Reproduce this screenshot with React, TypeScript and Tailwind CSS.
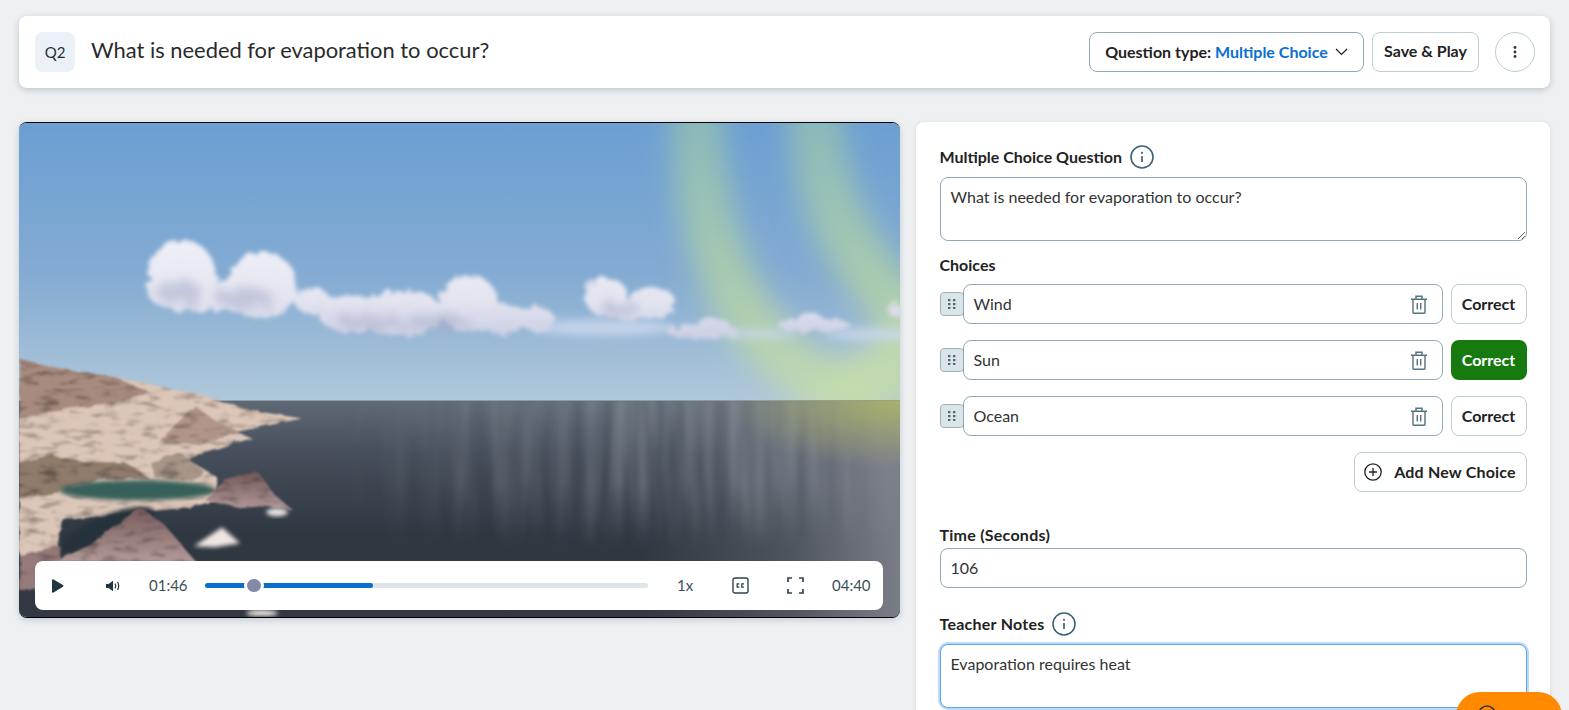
import React from "react";

const Trash = () => (
  <svg width="18" height="19" viewBox="0 0 18 19" fill="none" stroke="#56717f" strokeWidth="1.4" className="shrink-0">
    <path d="M1 4.2h16M6 4V1.2h6V4M3 4.2V17.6a.6.6 0 0 0 .6.6h10.8a.6.6 0 0 0 .6-.6V4.2" />
    <path d="M7.3 8v6.5M10.7 8v6.5" />
  </svg>
);

const Info = () => (
  <svg width="24" height="24" viewBox="0 0 24 24" fill="none" className="shrink-0">
    <circle cx="12" cy="12" r="11" stroke="#3f6273" strokeWidth="1.6" />
    <circle cx="12" cy="7.8" r="1.1" fill="#3f6273" />
    <path d="M12 11v6" stroke="#3f6273" strokeWidth="1.7" />
  </svg>
);

const Handle = () => (
  <div className="flex h-[24px] w-[24px] shrink-0 items-center justify-start rounded-[4px] border border-[#9db4bf] bg-[#dbe5e8] pl-[7px]">
    <svg width="8" height="10" viewBox="0 0 8 10" fill="#4d6775">
      <rect x="0" y="0" width="2.4" height="2.2" />
      <rect x="5" y="0" width="2.4" height="2.2" />
      <rect x="0" y="4" width="2.4" height="2.2" />
      <rect x="5" y="4" width="2.4" height="2.2" />
      <rect x="0" y="8" width="2.4" height="2.2" />
      <rect x="5" y="8" width="2.4" height="2.2" />
    </svg>
  </div>
);

const Choice = ({ label, correct }: { label: string; correct?: boolean }) => (
  <div className="flex items-center">
    <Handle />
    <div className="relative -ml-[1px] flex h-[40px] w-[480px] items-center justify-between rounded-[8px] border border-[#8fa9b5] bg-white pl-[10px] pr-[14px] text-[16px] text-[#333]">
      <span className="pb-[1px]">{label}</span>
      <Trash />
    </div>
    <button
      className={
        correct
          ? "ml-[8px] flex h-[40px] w-[76px] items-center justify-center rounded-[8px] bg-[#167a0e] pb-[1px] text-[16px] font-bold text-white"
          : "ml-[8px] flex h-[40px] w-[76px] items-center justify-center rounded-[8px] border border-[#bccdd5] bg-white pb-[1px] text-[16px] font-bold text-[#222]"
      }
    >
      Correct
    </button>
  </div>
);

const VideoScene = () => (
  <svg viewBox="19 122 881 495" preserveAspectRatio="none" className="block h-full w-full">
    <defs>
      <linearGradient id="sky" x1="0" y1="0" x2="0" y2="1">
        <stop offset="0" stopColor="#6b9fd3" />
        <stop offset="0.55" stopColor="#84abd2" />
        <stop offset="1" stopColor="#b0c8da" />
      </linearGradient>
      <linearGradient id="sea" x1="0" y1="0" x2="0" y2="1">
        <stop offset="0" stopColor="#5f6975" />
        <stop offset="0.25" stopColor="#454e5a" />
        <stop offset="0.62" stopColor="#2f3741" />
        <stop offset="1" stopColor="#313843" />
      </linearGradient>
      <linearGradient id="haze" gradientUnits="userSpaceOnUse" x1="640" y1="0" x2="899" y2="0">
        <stop offset="0" stopColor="#8a8e98" stopOpacity="0" />
        <stop offset="0.6" stopColor="#8a8e98" stopOpacity="0.35" />
        <stop offset="1" stopColor="#80848e" stopOpacity="0.9" />
      </linearGradient>
      <radialGradient id="olive" gradientUnits="userSpaceOnUse" cx="899" cy="400" r="170" gradientTransform="translate(0 240) scale(1 0.4)">
        <stop offset="0" stopColor="#b4bd63" stopOpacity="0.8" />
        <stop offset="1" stopColor="#b4bd63" stopOpacity="0" />
      </radialGradient>
      <linearGradient id="beam" gradientUnits="userSpaceOnUse" x1="0" y1="122" x2="0" y2="400">
        <stop offset="0" stopColor="#93bfb4" />
        <stop offset="0.6" stopColor="#b2d2a6" />
        <stop offset="1" stopColor="#c6dcaa" />
      </linearGradient>
      <linearGradient id="peak" x1="0" y1="0" x2="0" y2="1">
        <stop offset="0" stopColor="#75595a" />
        <stop offset="1" stopColor="#b39a98" />
      </linearGradient>
      <linearGradient id="cloudFill" gradientUnits="userSpaceOnUse" x1="0" y1="240" x2="0" y2="340">
        <stop offset="0" stopColor="#efeff7" />
        <stop offset="0.6" stopColor="#e3e4f0" />
        <stop offset="1" stopColor="#c9cde2" />
      </linearGradient>
      <filter id="b3" x="-30%" y="-30%" width="160%" height="160%">
        <feGaussianBlur stdDeviation="2.2" />
      </filter>
      <filter id="b14" x="-60%" y="-20%" width="220%" height="140%">
        <feGaussianBlur stdDeviation="14" />
      </filter>
      <filter id="b5" x="-30%" y="-60%" width="160%" height="220%">
        <feGaussianBlur stdDeviation="5" />
      </filter>
      <filter id="cloud" x="-10%" y="-20%" width="120%" height="140%">
        <feTurbulence type="fractalNoise" baseFrequency="0.12" numOctaves="3" seed="4" />
        <feDisplacementMap in="SourceGraphic" scale="11" />
        <feGaussianBlur stdDeviation="2" />
      </filter>
      <filter id="cloudShade" x="-20%" y="-40%" width="140%" height="180%">
        <feTurbulence type="fractalNoise" baseFrequency="0.08" numOctaves="3" seed="9" />
        <feDisplacementMap in="SourceGraphic" scale="22" />
        <feGaussianBlur stdDeviation="5" />
      </filter>
      <filter id="rock" x="-5%" y="-5%" width="110%" height="110%" colorInterpolationFilters="sRGB">
        <feTurbulence type="fractalNoise" baseFrequency="0.07" numOctaves="3" seed="7" result="n1" />
        <feDisplacementMap in="SourceGraphic" in2="n1" scale="5" result="d" />
        <feTurbulence type="fractalNoise" baseFrequency="0.05 0.17" numOctaves="4" seed="3" result="n2" />
        <feColorMatrix in="n2" values="0.9 0 0 0 0.55  0.9 0 0 0 0.55  0.9 0 0 0 0.55  0 0 0 0 1" result="g" />
        <feComposite in="d" in2="g" operator="arithmetic" k1="1" k2="0" k3="0" k4="0" />
        <feGaussianBlur stdDeviation="0.8" />
      </filter>
      <filter id="rain" x="0" y="0" width="100%" height="100%">
        <feTurbulence type="fractalNoise" baseFrequency="0.07 0.005" numOctaves="3" seed="11" />
        <feColorMatrix values="0 0 0 0 0.6  0 0 0 0 0.63  0 0 0 0 0.68  0 0 0 1.7 -0.55" />
        <feGaussianBlur stdDeviation="2.5" />
      </filter>
      <linearGradient id="rainV" x1="0" y1="0" x2="0" y2="1">
        <stop offset="0" stopColor="#fff" stopOpacity="0.35" />
        <stop offset="0.55" stopColor="#fff" stopOpacity="0.38" />
        <stop offset="1" stopColor="#fff" stopOpacity="0" />
      </linearGradient>
      <linearGradient id="rainH" x1="0" y1="0" x2="1" y2="0">
        <stop offset="0" stopColor="#000" />
        <stop offset="0.45" stopColor="#fff" />
        <stop offset="1" stopColor="#fff" />
      </linearGradient>
      <mask id="rainMV" maskUnits="userSpaceOnUse" x="340" y="400" width="560" height="150">
        <rect x="340" y="400" width="560" height="150" fill="url(#rainV)" />
      </mask>
      <mask id="rainMH" maskUnits="userSpaceOnUse" x="340" y="340" width="560" height="210">
        <rect x="340" y="340" width="560" height="210" fill="url(#rainH)" />
      </mask>
    </defs>

    <rect x="19" y="122" width="881" height="278" fill="url(#sky)" />

    {/* green beams */}
    <g filter="url(#b14)" fill="none">
      <path d="M698 100C695 190 715 280 770 345C800 375 850 395 880 410" stroke="url(#beam)" strokeWidth="54" opacity="0.82" />
      <path d="M815 100C815 180 840 250 920 330" stroke="url(#beam)" strokeWidth="56" opacity="0.82" />
      <path d="M790 402L920 402L920 300Z" fill="#c6dcaa" stroke="none" opacity="0.85" />
    </g>

    {/* thin cloud band */}
    <g filter="url(#b5)" fill="#cad8ec" opacity="0.9">
      <ellipse cx="605" cy="327" rx="70" ry="8" />
      <ellipse cx="875" cy="334" rx="50" ry="6" />
      <ellipse cx="760" cy="333" rx="40" ry="4" />
    </g>

    {/* clouds */}
    <g filter="url(#cloud)" fill="url(#cloudFill)">
      <ellipse cx="182" cy="275" rx="34" ry="36" />
      <ellipse cx="163" cy="285" rx="17" ry="20" />
      <ellipse cx="262" cy="285" rx="36" ry="33" />
      <rect x="175" y="280" width="115" height="30" rx="12" />
      <ellipse cx="312" cy="300" rx="18" ry="13" />
      <ellipse cx="352" cy="313" rx="34" ry="19" />
      <ellipse cx="402" cy="313" rx="42" ry="23" />
      <ellipse cx="468" cy="302" rx="30" ry="28" />
      <ellipse cx="500" cy="318" rx="32" ry="15" />
      <ellipse cx="537" cy="318" rx="17" ry="12" />
      <ellipse cx="606" cy="296" rx="21" ry="20" />
      <ellipse cx="652" cy="302" rx="23" ry="16" />
      <ellipse cx="630" cy="309" rx="32" ry="9" />
      <ellipse cx="702" cy="331" rx="36" ry="8" />
      <ellipse cx="714" cy="326" rx="16" ry="9" />
      <ellipse cx="815" cy="325" rx="36" ry="7" />
      <ellipse cx="810" cy="320" rx="14" ry="7" />
      <ellipse cx="896" cy="310" rx="6" ry="8" />
    </g>
    <g filter="url(#cloudShade)" fill="#a9aecb" opacity="0.55">
      <ellipse cx="178" cy="292" rx="24" ry="13" />
      <ellipse cx="245" cy="298" rx="30" ry="11" />
      <ellipse cx="370" cy="322" rx="34" ry="8" />
      <ellipse cx="440" cy="322" rx="30" ry="8" />
      <ellipse cx="620" cy="308" rx="22" ry="6" />
    </g>

    {/* sea */}
    <rect x="19" y="400" width="881" height="217" fill="url(#sea)" />
    <g mask="url(#rainMH)">
      <rect x="340" y="400" width="560" height="150" filter="url(#rain)" mask="url(#rainMV)" />
    </g>
    <rect x="19" y="400" width="881" height="217" fill="url(#haze)" />
    <rect x="19" y="400" width="881" height="217" fill="url(#olive)" />

    {/* land */}
    <g filter="url(#rock)">
      <path d="M19 358L60 368L117 377L194 393L252 410L302 418L258 427L235 432L252 438L200 453L188 460L217 477L218 500L190 507L140 512L62 520L55 560L40 590L19 590Z" fill="#dcc6b8" />
      <path d="M19 358L60 368L117 377L150 392L120 402L70 408L19 418Z" fill="#a88b7f" />
      <path d="M195 405L215 420L240 432L200 445L160 440Z" fill="#b1958a" />
      <path d="M19 462L50 455L85 462L125 462L150 478L100 480L60 492L19 498Z" fill="#917c6c" />
      <path d="M150 462L180 452L205 472L190 480L155 478Z" fill="#a99689" />
      <path d="M19 555L60 545L62 590L19 590Z" fill="#957a79" />
    </g>
    <ellipse cx="138" cy="490" rx="78" ry="10" fill="#38605a" filter="url(#b3)" />
    <ellipse cx="108" cy="530" rx="50" ry="15" transform="rotate(-22 108 530)" fill="#25323a" filter="url(#b3)" />

    <g filter="url(#rock)">
      <path d="M205 500L232 476L258 472L275 495L293 510L260 506L240 508Z" fill="url(#peak)" />
      <path d="M53 562L90 545L112 527L141 507L165 525L196 562Z" fill="url(#peak)" />
    </g>
    <path d="M194 546L222 527L240 543L215 547Z" fill="#efe6e3" filter="url(#b3)" />
    <ellipse cx="277" cy="512" rx="11" ry="4" fill="#ece6e3" filter="url(#b3)" />
    <ellipse cx="262" cy="613" rx="16" ry="3" fill="#efe6e2" filter="url(#b3)" />
  </svg>
);

const Controls = () => (
  <div className="absolute bottom-[7px] left-[16px] flex h-[49px] w-[848px] items-center rounded-[8px] bg-white text-[15px] text-[#3c4f59]">
    <svg width="13" height="14" viewBox="0 0 13 14" className="ml-[16px] shrink-0">
      <path d="M1 1.2C1 .4 1.8 0 2.5.5l9.5 5.6c.6.4.6 1.3 0 1.7L2.5 13.5c-.7.5-1.5.1-1.5-.7Z" fill="#1f3640" />
    </svg>
    <svg width="15" height="12" viewBox="0 0 15 12" className="ml-[42px] shrink-0" fill="none">
      <path d="M0 4h2.6L7 .8v10.4L2.6 8H0Z" fill="#1f3640" />
      <path d="M9 3.6c.9 1.4.9 3.4 0 4.8M11.5 2c1.4 2.4 1.4 5.6 0 8" stroke="#1f3640" strokeWidth="1.2" />
    </svg>
    <span className="ml-[28px] w-[37px] shrink-0">01:46</span>
    <div className="relative ml-[19px] h-[5px] w-[443px] shrink-0 rounded-full bg-[#dde5e8]">
      <div className="absolute left-0 top-0 h-[5px] w-[168px] rounded-full bg-[#0a6fd0]" />
      <div className="absolute left-[39px] top-[-7px] h-[19px] w-[20px] rounded-full border-[3px] border-white bg-[#8389a8]" />
    </div>
    <span className="ml-[29px] w-[14px] shrink-0">1x</span>
    <svg width="17" height="17" viewBox="0 0 17 17" fill="none" className="ml-[41px] shrink-0">
      <rect x="1" y="1" width="15" height="15" rx="2" stroke="#2d4550" strokeWidth="1.4" />
      <path d="M7.4 6.8H5.2v3.4h2.2M12 6.8H9.8v3.4H12" stroke="#2d4550" strokeWidth="1.3" />
    </svg>
    <svg width="17" height="17" viewBox="0 0 17 17" fill="none" stroke="#2d4550" strokeWidth="1.7" className="ml-[38px] shrink-0">
      <path d="M1 5V1h4M12 1h4v4M16 12v4h-4M5 16H1v-4" />
    </svg>
    <span className="ml-[28px] shrink-0">04:40</span>
  </div>
);

export default function App() {
  return (
    <div className="relative h-[710px] w-full overflow-hidden bg-[#eef0f2] font-['Lato','Liberation_Sans',sans-serif] text-[#222]">
      <div className="px-[19px] pt-[16px]">
        <div className="flex h-[72px] w-[1531px] items-center rounded-[8px] bg-white pl-[16px] pr-[15px] shadow-[0_2px_6px_rgba(60,90,105,0.28)]">
          <div className="flex h-[40px] w-[40px] items-center justify-center rounded-[8px] bg-[#ecf1f8] text-[15px] text-[#222f3a]">
            Q2
          </div>
          <div className="ml-[16px] flex-1 pb-[3px] text-[21.9px] text-[#2a2a2a]">What is needed for evaporation to occur?</div>
          <button className="flex h-[40px] w-[275px] items-center justify-center gap-[7px] rounded-[8px] border border-[#8fa9b5] text-[16px] font-bold">
            <span>
              Question type: <span className="text-[#0a6fd0]">Multiple Choice</span>
            </span>
            <svg width="13" height="8" viewBox="0 0 13 8" fill="none" stroke="#222" strokeWidth="1.2">
              <path d="M1 1l5.5 5.5L12 1" />
            </svg>
          </button>
          <button className="ml-[8px] flex h-[40px] w-[107px] items-center justify-center rounded-[8px] border border-[#bccdd5] pb-[2px] text-[16px] font-bold">
            Save &amp; Play
          </button>
          <button className="ml-[16px] flex h-[40px] w-[40px] items-center justify-center rounded-full border border-[#bccdd5]">
            <svg width="4" height="12" viewBox="0 0 4 12" fill="#333">
              <circle cx="2" cy="1.5" r="1.4" />
              <circle cx="2" cy="6" r="1.4" />
              <circle cx="2" cy="10.5" r="1.4" />
            </svg>
          </button>
        </div>

        <div className="mt-[34px] flex items-start gap-[16px]">
          <div className="relative h-[496px] w-[881px] shrink-0 overflow-hidden rounded-[8px] border-y border-black shadow-[0_2px_6px_rgba(60,90,105,0.25)]">
            <VideoScene />
            <Controls />
          </div>

          <div className="w-[634px] shrink-0 rounded-[8px] bg-white pl-[23.5px] pr-[23.5px] pt-[23px] pb-[40px] shadow-[0_1px_4px_rgba(60,90,105,0.15)]">
            <div className="flex h-[24px] items-center gap-[8px] text-[16px] font-bold">
              <span>Multiple Choice Question</span>
              <Info />
            </div>
            <textarea
              readOnly
              value="What is needed for evaporation to occur?"
              className="mt-[8px] block h-[64px] w-[587px] rounded-[8px] border border-[#8fa9b5] bg-white px-[10px] py-[7px] text-[16px] text-[#333] outline-none"
            />
            <div className="mt-[15px] h-[18px] text-[16px] font-bold leading-[18px]">Choices</div>
            <div className="mt-[10px] flex flex-col gap-[16px]">
              <Choice label="Wind" />
              <Choice label="Sun" correct />
              <Choice label="Ocean" />
            </div>
            <div className="mt-[16px] flex w-[587px] justify-end">
              <button className="flex h-[40px] w-[173px] items-center justify-center gap-[12px] rounded-[8px] border border-[#bccdd5] pb-[1px] text-[16px] font-bold tracking-[0.2px]">
                <svg width="18" height="18" viewBox="0 0 18 18" fill="none" stroke="#222" strokeWidth="1.3">
                  <circle cx="9" cy="9" r="8.2" />
                  <path d="M9 5v8M5 9h8" />
                </svg>
                Add New Choice
              </button>
            </div>
            <div className="mt-[34px] h-[18px] text-[16px] font-bold leading-[18px] tracking-[0.25px]">Time (Seconds)</div>
            <div className="mt-[4px] flex h-[40px] w-[587px] items-center rounded-[8px] border border-[#8fa9b5] px-[10px] pb-[1px] text-[16px] text-[#333]">
              106
            </div>
            <div className="mt-[24px] flex h-[24px] items-center gap-[8px] text-[16px] font-bold tracking-[0.25px]">
              <span>Teacher Notes</span>
              <Info />
            </div>
            <textarea
              readOnly
              value="Evaporation requires heat"
              className="mt-[8px] block h-[64px] w-[587px] rounded-[8px] border border-[#5aa5ee] bg-white px-[10px] py-[7px] text-[16px] text-[#333] shadow-[0_0_0_2px_#bcd9f5] outline-none"
            />
          </div>
        </div>
      </div>

      <div className="absolute left-[1456px] top-[692px] flex h-[48px] w-[106px] items-start rounded-[24px] bg-[#ff8a00] pl-[22px] pt-[13px]">
        <svg width="18" height="18" viewBox="0 0 18 18" fill="none" stroke="#333" strokeWidth="1.6">
          <circle cx="9" cy="9" r="8" />
        </svg>
      </div>
    </div>
  );
}
